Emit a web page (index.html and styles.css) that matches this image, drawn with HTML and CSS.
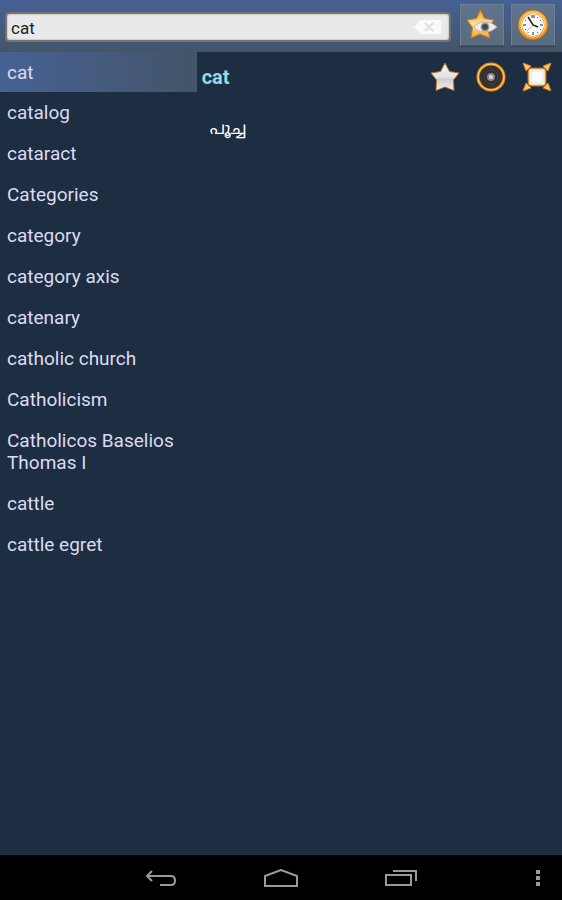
FILE: index.html
```html
<!DOCTYPE html>
<html lang="en">
<head>
    <meta charset="UTF-8">
    <meta name="viewport" content="width=device-width, initial-scale=1.0">
    <title>Dictionary</title>
    <link rel="stylesheet" href="styles.css">
</head>
<body>
    <header class="search-bar">
        <form class="search-form">
            <input type="text" id="search" name="search" value="cat" aria-label="Search">
            <button type="reset" class="clear-button" aria-label="Clear">
                <svg width="28" height="14" viewBox="0 0 28 14">
                    <path d="M0 7 7 0H27V14H7Z" fill="#fafafa"/>
                    <path d="M11 3 19 11M19 3 11 11" stroke="#dedede" stroke-width="2"/>
                </svg>
            </button>
        </form>
        <button type="button" class="tool-button" aria-label="Favorites">
            <svg width="32" height="32" viewBox="0 0 32 32">
                <defs>
                    <linearGradient id="gold" x2="0" y2="1">
                        <stop offset="0" stop-color="#f79a1c"/>
                        <stop offset="0.5" stop-color="#ffe09a"/>
                        <stop offset="1" stop-color="#f5a52c"/>
                    </linearGradient>
                </defs>
                <path d="M14.500 1 18.500 9.500 28 11 22 18 23.500 29 14 25 5 29 6.500 18.500 1 11 10.500 9.500Z" fill="url(#gold)" stroke="#cf7a1a" stroke-linejoin="round"/>
                <path d="M8 18Q12 13 19 13 26 13 31 18 26 23 19 23 12 23 8 18Z" fill="#efefef" stroke="#b5b5b5"/>
                <circle cx="19" cy="18" r="4.500" fill="#999"/>
                <circle cx="19" cy="18" r="3" fill="#484848"/>
            </svg>
        </button>
        <button type="button" class="tool-button" aria-label="History">
            <svg width="32" height="32" viewBox="0 0 32 32">
                <defs>
                    <linearGradient id="ring" x2="0" y2="1">
                        <stop offset="0" stop-color="#ffbd3c"/>
                        <stop offset="1" stop-color="#f48a12"/>
                    </linearGradient>
                </defs>
                <circle cx="16" cy="16" r="13" fill="#f8f8f8" stroke="#b86b12" stroke-width="4"/>
                <circle cx="16" cy="16" r="13" fill="none" stroke="url(#ring)" stroke-width="3"/>
                <circle cx="16" cy="16" r="12" fill="none" stroke="#ffe0a0"/>
                <path d="M15 6V9M17 6V9M16 23V26M23 16H26M6 16H9" stroke="#222"/>
                <path d="M20.500 8V9M23 11.500H24M23 20.500H24M20.500 23V24M11 23V24M8 20.500H9M8 11.500H9" stroke="#666"/>
                <path d="M16 16 10 22" stroke="#f0a090"/>
                <path d="M11 8 16 16 21 18" fill="none" stroke="#222" stroke-width="1.500"/>
            </svg>
        </button>
    </header>

    <main class="content">
        <ul class="word-list">
            <li><a href="#cat" class="selected">cat</a></li>
            <li><a href="#catalog">catalog</a></li>
            <li><a href="#cataract">cataract</a></li>
            <li><a href="#categories">Categories</a></li>
            <li><a href="#category">category</a></li>
            <li><a href="#category-axis">category axis</a></li>
            <li><a href="#catenary">catenary</a></li>
            <li><a href="#catholic-church">catholic church</a></li>
            <li><a href="#catholicism">Catholicism</a></li>
            <li><a href="#catholicos">Catholicos Baselios Thomas I</a></li>
            <li><a href="#cattle">cattle</a></li>
            <li><a href="#cattle-egret">cattle egret</a></li>
        </ul>
        <article class="entry" id="cat">
            <div class="entry-header">
                <h1>cat</h1>
                <div class="entry-actions">
                    <button type="button" aria-label="Add to favorites">
                        <svg width="30" height="30" viewBox="0 0 30 30">
                            <defs>
                                <linearGradient id="silver" x2="0" y2="1">
                                    <stop offset="0" stop-color="#f4f4f4"/>
                                    <stop offset="0.5" stop-color="#e4e4e4"/>
                                    <stop offset="0.6" stop-color="#cecece"/>
                                    <stop offset="1" stop-color="#f0f0f0"/>
                                </linearGradient>
                            </defs>
                            <path d="M15 1 19.500 9.500 29 11 23.500 18 24 28.500 15 25 6 28.500 6.500 18 1 11 10.500 9.500Z" fill="url(#silver)" stroke="#b8702a" stroke-linejoin="round"/>
                        </svg>
                    </button>
                    <button type="button" aria-label="Listen">
                        <svg width="30" height="30" viewBox="0 0 30 30">
                            <circle cx="15" cy="15" r="13" fill="#303030" stroke="#f08a10" stroke-width="3"/>
                            <circle cx="15" cy="15" r="13" fill="none" stroke="#ffd275"/>
                            <circle cx="15" cy="15" r="10" fill="none" stroke="#3c3c3c"/>
                            <circle cx="15" cy="15" r="7" fill="none" stroke="#424242"/>
                            <circle cx="15" cy="15" r="4" fill="#8c8c8c"/>
                            <circle cx="15" cy="15" r="2" fill="#ddd"/>
                        </svg>
                    </button>
                    <button type="button" aria-label="Full screen">
                        <svg width="30" height="30" viewBox="0 0 30 30">
                            <g fill="#ffc977" stroke="#d47a1c" stroke-linejoin="round">
                                <path d="M1 1 9 4 4 9Z"/>
                                <path d="M29 1 21 4 26 9Z"/>
                                <path d="M1 29 9 26 4 21Z"/>
                                <path d="M29 29 21 26 26 21Z"/>
                            </g>
                            <rect x="7" y="7" width="16" height="16" rx="2" fill="#fff" stroke="#b86a18" stroke-width="3"/>
                            <rect x="7" y="7" width="16" height="16" rx="2" fill="#fff" stroke="#f3b566"/>
                            <rect x="9" y="9" width="12" height="12" fill="#fafafa" stroke="#ddd"/>
                        </svg>
                    </button>
                </div>
            </div>
            <p class="translation" lang="ml">പൂച്ച</p>
        </article>
    </main>

    <nav class="nav-bar">
        <button type="button" aria-label="Back">
            <svg width="32" height="18" viewBox="0 0 32 18">
                <path d="M7 2 2 7 7 12M2 7H26Q30 7 30 11.500 30 16 26 16H15" fill="none" stroke="#9a9a9a" stroke-width="2"/>
            </svg>
        </button>
        <button type="button" aria-label="Home">
            <svg width="34" height="18" viewBox="0 0 34 18">
                <path d="M1 17V7L17 1 33 7V17Z" fill="none" stroke="#9a9a9a" stroke-width="2"/>
            </svg>
        </button>
        <button type="button" aria-label="Recent apps">
            <svg width="32" height="17" viewBox="0 0 32 17">
                <path d="M1 6H26V16H1ZM8 2H31V12" fill="none" stroke="#9a9a9a" stroke-width="2"/>
            </svg>
        </button>
        <button type="button" class="menu-button" aria-label="Menu">
            <svg width="4" height="16" viewBox="0 0 4 16">
                <path d="M0 0H4V4H0ZM0 6H4V10H0ZM0 12H4V16H0Z" fill="#9a9a9a"/>
            </svg>
        </button>
    </nav>
</body>
</html>
```

FILE: styles.css
```css
* {
    box-sizing: border-box;
}

body {
    display: flex;
    flex-direction: column;
    min-height: 100vh;
    margin: 0;
    background-color: #1d2d42;
    color: #dcdcf0;
    font-family: Roboto, "Noto Sans", sans-serif;
}

button {
    display: flex;
    align-items: center;
    justify-content: center;
    padding: 0;
    border: none;
    background: none;
    cursor: pointer;
}

/* Search bar */
.search-bar {
    display: flex;
    align-items: flex-start;
    gap: 7px;
    padding: 4px 7px 6px 5px;
    background: linear-gradient(#466194, #435568);
}

.search-form {
    display: flex;
    flex: 1;
    min-width: 0;
    height: 30px;
    margin: 8px 2px 0 0;
    border: 2px solid #727272;
    border-radius: 4px;
    background-color: #e9e9e9;
    box-shadow: inset 0 0 2px #888;
}

#search {
    flex: 1;
    min-width: 0;
    padding: 2px 4px 0;
    border: none;
    outline: none;
    background: none;
    color: #222;
    font-family: inherit;
    font-size: 17px;
}

.clear-button {
    width: 42px;
}

.tool-button {
    width: 44px;
    height: 42px;
    border: 1px solid #6d8095;
    border-bottom-color: #42546a;
    background: linear-gradient(#60748f, #596b7c);
    box-shadow: 0 1px 1px #34465c;
}

/* Word list */
.content {
    display: flex;
    flex: 1;
}

.word-list {
    width: 35%;
    margin: 0;
    padding: 0;
    list-style: none;
}

.word-list a {
    display: block;
    padding: 10px 7px 8px;
    border-bottom: 1px solid #222b36;
    color: inherit;
    font-size: 19px;
    line-height: 22px;
    text-decoration: none;
}

.word-list .selected {
    border-bottom: none;
    background: linear-gradient(to right, #466194, #435568);
}

/* Entry */
.entry {
    flex: 1;
    padding: 9px 10px 0 5px;
}

.entry-header {
    display: flex;
    align-items: center;
    justify-content: space-between;
}

h1 {
    margin: 0;
    color: #91dbe0;
    font-size: 20px;
    line-height: 32px;
}

.entry-actions {
    display: flex;
    gap: 16px;
}

.translation {
    margin: 24px 8px;
    color: #fff;
    font-family: Roboto, "Noto Sans Malayalam", "Noto Sans", sans-serif;
    font-size: 17px;
    line-height: 22px;
}

/* System navigation */
.nav-bar {
    display: grid;
    grid-template-columns: 1fr 120px 120px 120px 1fr;
    height: 45px;
    background-color: #000;
}

.nav-bar button {
    grid-row: 1;
}

.nav-bar button:nth-child(1) {
    grid-column: 2;
}

.nav-bar button:nth-child(2) {
    grid-column: 3;
}

.nav-bar button:nth-child(3) {
    grid-column: 4;
}

.nav-bar .menu-button {
    grid-column: 5;
    justify-content: flex-end;
    padding-right: 22px;
}
```
